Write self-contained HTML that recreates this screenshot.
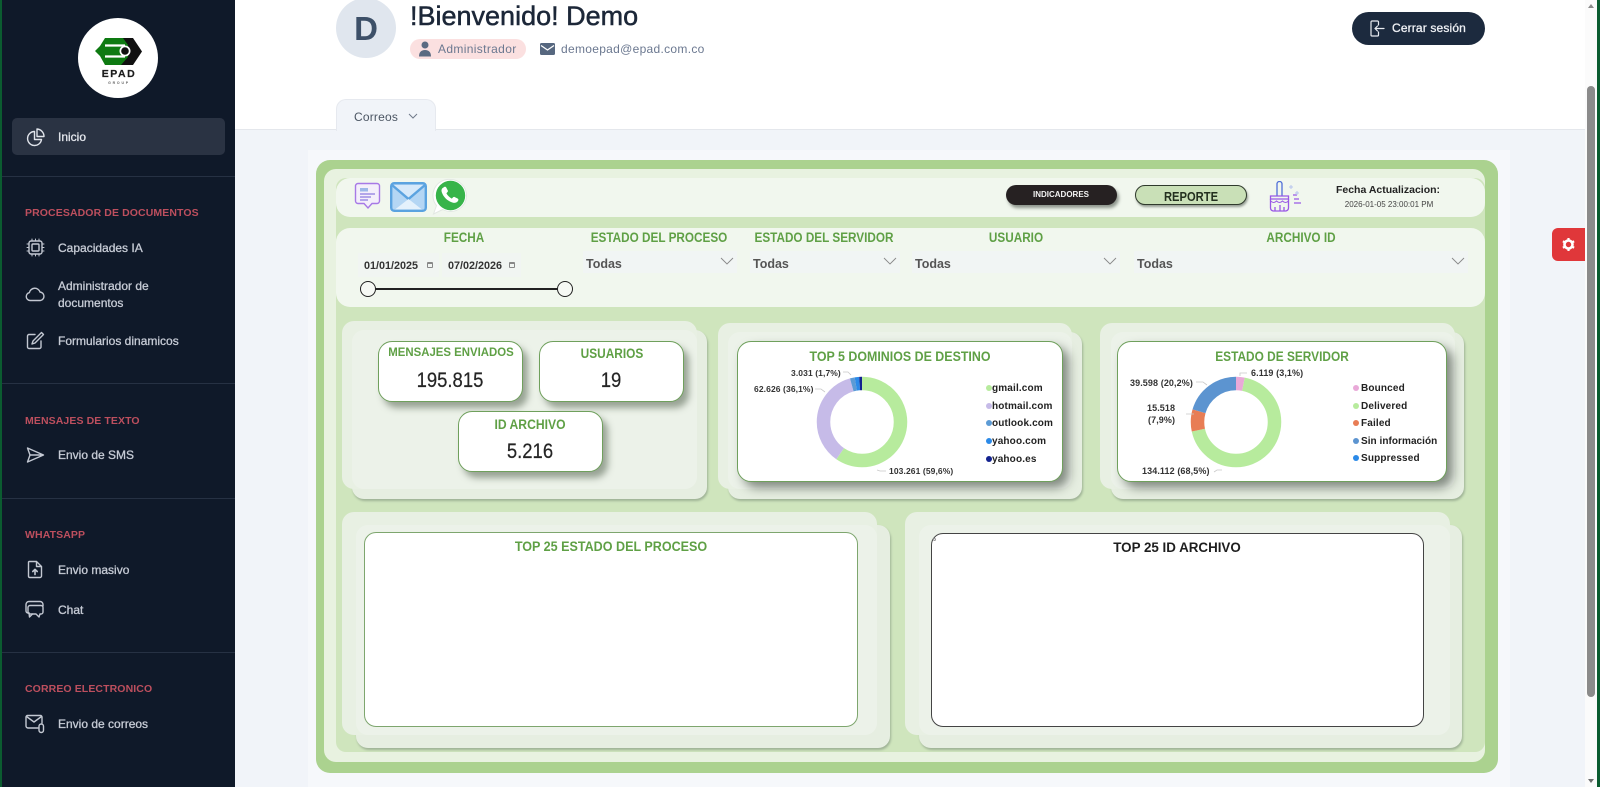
<!DOCTYPE html>
<html lang="es"><head><meta charset="utf-8"><title>Dashboard</title>
<style>
*{box-sizing:border-box}
html,body{margin:0;padding:0;width:1600px;height:787px;overflow:hidden;background:#f1f4f9;font-family:"Liberation Sans",sans-serif}
.a{position:absolute}
.t{position:absolute;white-space:nowrap;line-height:1}
.c{transform:translateX(-50%) scaleX(var(--s,1))}
.nav{position:absolute;left:58px;font-size:12px;line-height:17px;color:#c6cbd5;-webkit-text-stroke:.3px #c6cbd5;white-space:nowrap}
.sec{position:absolute;left:25px;font-size:10.5px;font-weight:bold;line-height:12px;color:#bd4f5e;letter-spacing:.1px;white-space:nowrap}
.div{position:absolute;left:2px;width:233px;height:1px;background:#263143}
.ic{position:absolute;fill:none;stroke:#c3c8d2;stroke-width:1.4;stroke-linecap:round;stroke-linejoin:round}
.back{position:absolute;background:#e6eee1;border-radius:12px}
.b1{background:#e8f0e3}
.b3{background:#ecf2e9}
.back2{box-shadow:1px 2px 2px #9fb396}
.card{position:absolute;background:#fff;border:1px solid #6fa05c;border-radius:14px;box-shadow:5px 6px 7px rgba(70,85,65,.5)}
.big{box-shadow:6px 6px 10px rgba(60,70,60,.6)}
.g{color:#5fa045;font-weight:bold}
.lab{font-size:13.5px;font-weight:bold;color:#5fa045;--s:.87}
.dd{position:absolute;height:22px;background:#f1f5f4;top:251px;color:#555;font-size:12.5px;font-weight:bold;padding:4.5px 0 0 3px;line-height:16px}
.dd svg{position:absolute;right:3px;top:6px}
.date{position:absolute;top:253px;height:24px;background:#f1f5f2;font-size:10.8px;font-weight:bold;color:#333;line-height:26px;padding-left:6px}
.date i{position:absolute;right:6px;top:9px;width:6px;height:6px;border:1px solid #888;border-top-width:2px;border-radius:1px}
.num{font-size:21px;color:#252525;-webkit-text-stroke:.2px #252525;--s:.88}
.leg{font-size:10px;font-weight:bold;color:#222;letter-spacing:.15px}
.dot{position:absolute;width:6px;height:6px;border-radius:50%}
.dl{font-size:8.5px;font-weight:bold;color:#333;letter-spacing:.1px}
</style></head><body>

<!-- main top white -->
<div class="a" style="left:235px;top:0;width:1350px;height:130px;background:#fff;border-bottom:1px solid #e4e7ec"></div>
<!-- content light block -->
<div class="a" style="left:308px;top:150px;width:1202px;height:637px;background:#f6f8fb"></div>

<!-- sidebar -->
<div class="a" style="left:0;top:0;width:235px;height:787px;background:#0f1929"></div>
<div class="a" style="left:0;top:0;width:2px;height:787px;background:#0b5c30"></div>
<div class="a" style="left:78px;top:18px;width:80px;height:80px;border-radius:50%;background:#fff"></div>
<svg class="a" style="left:78px;top:18px" width="80" height="80" viewBox="0 0 80 80">
<path d="M17 33 L22 28 L27 20 L46 20 L52 27 L52 39 L46 47 L27 47 L22 38 Z" fill="#0e7a12"/>
<path d="M45 20 L55 20 L64 33.500 L55 47 L43 47 L50 39 L50 27 Z" fill="#111"/>
<path d="M27 27.500H47M27 38.500H47" stroke="#fff" stroke-width="2.200" fill="none"/>
<circle cx="47" cy="33" r="5.500" fill="#fff"/><circle cx="47" cy="33" r="3.800" fill="#111"/>
<text x="41" y="59" text-anchor="middle" font-family="Liberation Sans" font-size="10.500" font-weight="bold" letter-spacing="1.500" fill="#1c1c1c" stroke="#1c1c1c" stroke-width=".2">EPAD</text>
<text x="41" y="66" text-anchor="middle" font-family="Liberation Sans" font-size="3.500" font-weight="bold" letter-spacing="1.800" fill="#666">GROUP</text>
</svg>
<div class="a" style="left:12px;top:118px;width:213px;height:37px;background:#2a3343;border-radius:5px"></div>
<svg class="ic" style="left:26px;top:127px;stroke:#dfe3ea" width="20" height="20" viewBox="0 0 20 20"><path d="M8.500 4.500a7 7 0 1 0 7 8h-7z"/><path d="M11 2v7.500h7A7.500 7.500 0 0 0 11 2z"/></svg>
<div class="nav" style="top:129px;color:#e4e7ed;-webkit-text-stroke:.3px #e4e7ed">Inicio</div>
<div class="div" style="top:176px"></div>
<div class="sec" style="top:207px">PROCESADOR DE DOCUMENTOS</div>
<svg class="ic" style="left:26px;top:238px" width="19" height="19" viewBox="0 0 19 19"><rect x="3" y="3" width="13" height="13" rx="2"/><rect x="6" y="6" width="7" height="7" rx="1"/><path d="M6 1v2M9.500 1v2M13 1v2M6 16v2M9.500 16v2M13 16v2M1 6h2M1 9.500h2M1 13h2M16 6h2M16 9.500h2M16 13h2" stroke-width="1"/></svg>
<div class="nav" style="top:240px">Capacidades IA</div>
<svg class="ic" style="left:25px;top:285px" width="20" height="17" viewBox="0 0 20 17"><path d="M5 15.500a4 4 0 0 1-.6-7.900A5.500 5.500 0 0 1 15 7a4.300 4.300 0 0 1 .5 8.500z"/></svg>
<div class="nav" style="top:278px;line-height:17px">Administrador de<br>documentos</div>
<svg class="ic" style="left:26px;top:331px" width="19" height="19" viewBox="0 0 19 19"><path d="M9 3.500H3a1.500 1.500 0 0 0-1.500 1.500v11A1.500 1.500 0 0 0 3 17.500h10.500A1.500 1.500 0 0 0 15 16v-6"/><path d="M15.500 1.500l2 2L9 12l-3 1 1-3z"/></svg>
<div class="nav" style="top:333px">Formularios dinamicos</div>
<div class="div" style="top:383px"></div>
<div class="sec" style="top:415px">MENSAJES DE TEXTO</div>
<svg class="ic" style="left:26px;top:446px" width="19" height="18" viewBox="0 0 19 18"><path d="M1.500 2l16 7-16 7 2.500-7zM4 9h13"/></svg>
<div class="nav" style="top:447px">Envio de SMS</div>
<div class="div" style="top:498px"></div>
<div class="sec" style="top:529px">WHATSAPP</div>
<svg class="ic" style="left:27px;top:560px" width="16" height="19" viewBox="0 0 16 19"><path d="M2 1.500h7.500l5 5V16a1.500 1.500 0 0 1-1.500 1.500H2.500A1.500 1.500 0 0 1 1.500 16V2zM9.500 1.500v5h5"/><path d="M8 14.500v-5M5.800 11.500L8 9.300l2.200 2.200" stroke-width="1.600"/></svg>
<div class="nav" style="top:562px">Envio masivo</div>
<svg class="ic" style="left:25px;top:600px" width="20" height="19" viewBox="0 0 20 19"><path d="M4 13H3a2 2 0 0 1-2-2V4.500A3 3 0 0 1 4 1.500h11a3 3 0 0 1 3 3V6"/><path d="M6 5.500h11a2 2 0 0 1 2 2V12a2 2 0 0 1-2 2h-1l-1 3-3-3H6a2 2 0 0 1-2-2V7.500a2 2 0 0 1 2-2z" transform="translate(-1 0)"/><path d="M4 13l.5 4 3-3" /></svg>
<div class="nav" style="top:602px">Chat</div>
<div class="div" style="top:652px"></div>
<div class="sec" style="top:683px">CORREO ELECTRONICO</div>
<svg class="ic" style="left:25px;top:714px" width="21" height="20" viewBox="0 0 21 20"><path d="M13 14H3a2 2 0 0 1-2-2V3a1.500 1.500 0 0 1 1.500-1.500h13A1.500 1.500 0 0 1 17 3v6"/><path d="M1.500 2.500L9 8l7.500-5.500"/><rect x="14" y="10" width="4.500" height="8.500" rx="2.200"/></svg>
<div class="nav" style="top:716px">Envio de correos</div>

<!-- header -->
<div class="a" style="left:336px;top:-2px;width:60px;height:60px;border-radius:50%;background:#e0e6ee"></div>
<div class="t c" style="left:366px;top:12px;font-size:33px;font-weight:bold;color:#3d5068">D</div>
<div class="t" style="left:410px;top:0px;font-size:27px;line-height:32px;color:#1c2738;-webkit-text-stroke:.5px #1c2738">!Bienvenido! Demo</div>
<div class="a" style="left:410px;top:39px;width:116px;height:20px;border-radius:10px;background:#fbe0e0"></div>
<svg class="a" style="left:418px;top:41px" width="14" height="16" viewBox="0 0 14 16"><circle cx="7" cy="4" r="3.500" fill="#5b6b82"/><path d="M1 15.500c0-4 2-6.500 6-6.500s6 2.500 6 6.500z" fill="#5b6b82"/></svg>
<div class="t" style="left:438px;top:43px;font-size:12px;color:#6b7890;letter-spacing:.35px">Administrador</div>
<svg class="a" style="left:540px;top:43px" width="15" height="12" viewBox="0 0 15 12"><rect width="15" height="12" rx="1.500" fill="#56677f"/><path d="M1 2.500l6.500 4.500L14 2.500" fill="none" stroke="#fff" stroke-width="1.300"/></svg>
<div class="t" style="left:561px;top:43px;font-size:12px;color:#6b7890;letter-spacing:.3px">demoepad@epad.com.co</div>
<div class="a" style="left:1352px;top:12px;width:133px;height:33px;border-radius:17px;background:#1c2a3e"></div>
<svg class="a" style="left:1370px;top:20px" width="15" height="17" viewBox="0 0 15 17" fill="none" stroke="#e8ebf0" stroke-width="1.200" stroke-linecap="round" stroke-linejoin="round"><path d="M8.500 5V2a1 1 0 0 0-1-1H2a1 1 0 0 0-1 1v13a1 1 0 0 0 1 1h5.500a1 1 0 0 0 1-1v-3"/><path d="M14 8.500H5M7.500 6L5 8.500 7.500 11"/></svg>
<div class="t" style="left:1392px;top:22px;font-size:12px;color:#eef0f4;-webkit-text-stroke:.3px #eef0f4;letter-spacing:.15px">Cerrar sesión</div>
<div class="a" style="left:336px;top:99px;width:100px;height:32px;background:#f1f4f9;border:1px solid #e6e9ef;border-bottom:none;border-radius:10px 10px 0 0"></div>
<div class="t" style="left:354px;top:111px;font-size:12px;color:#4b5563;letter-spacing:.2px">Correos</div>
<svg class="a" style="left:408px;top:113px" width="10" height="7" viewBox="0 0 10 7"><path d="M1 1l4 4 4-4" fill="none" stroke="#707a8a" stroke-width="1"/></svg>

<!-- report -->
<div class="a" style="left:316px;top:160px;width:1182px;height:613px;background:#abd28f;border-radius:14px"></div>
<div class="a" style="left:324px;top:169px;width:1161px;height:593px;background:#e8f2e0;border-radius:12px"></div>
<div class="a" style="left:336px;top:178px;width:1149px;height:574px;background:#cfe5bd;border-radius:10px"></div>
<div class="a" style="left:336px;top:178px;width:1149px;height:39px;background:#f1f7ee;border-radius:14px"></div>
<div class="a" style="left:336px;top:228px;width:1149px;height:79px;background:#f1f7ee;border-radius:14px"></div>

<!-- top bar icons -->
<svg class="a" style="left:354px;top:182px" width="27" height="28" viewBox="0 0 27 28" fill="none"><path d="M4 1.500h19a2.500 2.500 0 0 1 2.500 2.500v15a2.500 2.500 0 0 1-2.500 2.500h-5l-4 4.500-4-4.500H4A2.500 2.500 0 0 1 1.500 19V4A2.500 2.500 0 0 1 4 1.500z" stroke="#a779e6" stroke-width="1.400" fill="#f4effb"/><rect x="6" y="6" width="8" height="3.500" fill="#9db8e8"/><path d="M6 12h15M6 15h11M6 18h8" stroke="#8c7ae0" stroke-width="1.300"/></svg>
<svg class="a" style="left:390px;top:182px" width="37" height="30" viewBox="0 0 37 30"><rect x="1.200" y="1.200" width="34.600" height="27.600" rx="3" fill="#b4d6f4" stroke="#5ba3e0" stroke-width="2.400"/><path d="M2 3l16.500 14L35 3" fill="#d6e9fa" stroke="#5ba3e0" stroke-width="2.400"/><path d="M5 27.500l13.500-10.500L32 27.500z" fill="#e4f1fc"/></svg>
<svg class="a" style="left:432px;top:178px" width="36" height="38" viewBox="0 0 36 38"><path d="M18.500 1.500a16 16 0 0 1 0 32c-2.800 0-5.400-.7-7.700-2L1.500 36l3-8.500A16 16 0 0 1 18.500 1.500z" fill="#fff" stroke="#e3e8e3"/><circle cx="18.500" cy="17.500" r="14.700" fill="#37b44a"/><path d="M11.500 9.500c1-1 2.300-.9 2.800.1l1.500 2.900c.3.700 0 1.300-.5 1.800l-.9 1c1.200 2.300 2.900 4 5.400 5.300l1.200-1.200c.5-.5 1.200-.6 1.800-.3l2.800 1.400c1 .5 1.100 1.700.2 2.700-1.500 1.600-3.500 2.100-5.800 1.200-5.200-2-8.500-5.400-10.200-10.200-.7-2.100-.1-3.900 1.700-4.700z" fill="#fff"/></svg>
<div class="a" style="left:1006px;top:185px;width:111px;height:20px;border-radius:10px;background:#262122;box-shadow:2px 3px 3px rgba(60,70,60,.55)"></div>
<div class="t c" style="left:1061px;top:191px;font-size:8px;font-weight:bold;color:#f3f3f3">INDICADORES</div>
<div class="a" style="left:1135px;top:185px;width:112px;height:20px;border-radius:10px;background:#c9e0b7;border:1px solid #2f3a2c;box-shadow:1px 2px 2px rgba(60,70,60,.5)"></div>
<div class="t c" style="left:1191px;top:190px;font-size:13px;font-weight:bold;color:#23301f;--s:.86">REPORTE</div>
<svg class="a" style="left:1268px;top:181px" width="34" height="32" viewBox="0 0 34 32" fill="none"><path d="M9 15V3a2.500 2.500 0 0 1 5 0v12" stroke="#4f6fd8" stroke-width="1.300"/><path d="M2.500 15h18v3h-18z" stroke="#9a58e6" stroke-width="1.300"/><path d="M2.500 18v9a3 3 0 0 0 3 3h12a3 3 0 0 0 3-3v-9M7 26v4M12 24v6M16 26v4" stroke="#9a58e6" stroke-width="1.300"/><path d="M2.500 20c3 2 4 2 6 0 2 2 4 2 6 0 2 2 4 2 6 0" stroke="#9a58e6" stroke-width="1"/><path d="M25 14h4M26 18h5M26 22h7" stroke="#9a58e6" stroke-width="1.300"/><path d="M23 4v4M21 6h4M29 10v4M27 12h4" stroke="#b7c4ee" stroke-width="1"/></svg>
<div class="t c" style="left:1388px;top:185px;font-size:10.500px;font-weight:bold;color:#222">Fecha Actualizacion:</div>
<div class="t c" style="left:1389px;top:201px;font-size:8px;color:#444">2026-01-05 23:00:01 PM</div>

<!-- filter labels -->
<div class="t c lab" style="left:464px;top:231px">FECHA</div>
<div class="t c lab" style="left:659px;top:231px">ESTADO DEL PROCESO</div>
<div class="t c lab" style="left:824px;top:231px">ESTADO DEL SERVIDOR</div>
<div class="t c lab" style="left:1016px;top:231px">USUARIO</div>
<div class="t c lab" style="left:1301px;top:231px">ARCHIVO ID</div>
<div class="date" style="left:358px;width:81px">01/01/2025<i></i></div>
<div class="date" style="left:442px;width:79px">07/02/2026<i></i></div>
<div class="a" style="left:368px;top:288px;width:197px;height:2px;background:#222"></div>
<div class="a" style="left:360px;top:281px;width:16px;height:16px;border-radius:50%;background:#f6f9f4;border:1.500px solid #222"></div>
<div class="a" style="left:557px;top:281px;width:16px;height:16px;border-radius:50%;background:#f6f9f4;border:1.500px solid #222"></div>
<div class="dd" style="left:583px;width:154px">Todas<svg width="14" height="9" viewBox="0 0 14 9"><path d="M1 1l6 6 6-6" fill="none" stroke="#888" stroke-width=".9"/></svg></div>
<div class="dd" style="left:750px;width:150px">Todas<svg width="14" height="9" viewBox="0 0 14 9"><path d="M1 1l6 6 6-6" fill="none" stroke="#888" stroke-width=".9"/></svg></div>
<div class="dd" style="left:912px;width:208px">Todas<svg width="14" height="9" viewBox="0 0 14 9"><path d="M1 1l6 6 6-6" fill="none" stroke="#888" stroke-width=".9"/></svg></div>
<div class="dd" style="left:1134px;width:334px">Todas<svg width="14" height="9" viewBox="0 0 14 9"><path d="M1 1l6 6 6-6" fill="none" stroke="#888" stroke-width=".9"/></svg></div>

<!-- KPI group -->
<div class="back back2" style="left:352px;top:330px;width:355px;height:169px"></div>
<div class="back b1" style="left:342px;top:321px;width:355px;height:168px"></div>
<div class="back b3" style="left:352px;top:330px;width:345px;height:159px"></div>
<div class="card" style="left:378px;top:341px;width:145px;height:61px"></div>
<div class="t c g" style="left:451px;top:346px;font-size:12px;--s:.95">MENSAJES ENVIADOS</div>
<div class="t c num" style="left:450px;top:370px">195.815</div>
<div class="card" style="left:539px;top:341px;width:145px;height:61px"></div>
<div class="t c g" style="left:612px;top:347px;font-size:13.500px;--s:.88">USUARIOS</div>
<div class="t c num" style="left:611px;top:370px">19</div>
<div class="card" style="left:458px;top:411px;width:145px;height:61px"></div>
<div class="t c g" style="left:530px;top:418px;font-size:13.500px;--s:.9">ID ARCHIVO</div>
<div class="t c num" style="left:530px;top:441px">5.216</div>

<!-- donut 1 -->
<div class="back back2" style="left:728px;top:332px;width:354px;height:167px"></div>
<div class="back b1" style="left:718px;top:323px;width:354px;height:166px"></div>
<div class="back b3" style="left:728px;top:332px;width:344px;height:157px"></div>
<div class="card big" style="left:737px;top:341px;width:326px;height:141px"></div>
<div class="t c g" style="left:900px;top:350px;font-size:13.500px;--s:.92">TOP 5 DOMINIOS DE DESTINO</div>
<svg class="a" style="left:737px;top:341px" width="326" height="141" viewBox="737 341 326 141">
<g fill="none" stroke-width="13.500" transform="rotate(-90 862 422)">
<circle cx="862" cy="422" r="38.500" pathLength="100" stroke="#b7eb9d" stroke-dasharray="59.6 40.4"/>
<circle cx="862" cy="422" r="38.500" pathLength="100" stroke="#c6bbe8" stroke-dasharray="36.1 63.900" stroke-dashoffset="-59.6"/>
<circle cx="862" cy="422" r="38.500" pathLength="100" stroke="#5c9bd5" stroke-dasharray="1.700 98.300" stroke-dashoffset="-95.7"/>
<circle cx="862" cy="422" r="38.500" pathLength="100" stroke="#2b8ae8" stroke-dasharray="1.600 98.400" stroke-dashoffset="-97.4"/>
<circle cx="862" cy="422" r="38.500" pathLength="100" stroke="#13228f" stroke-dasharray="1 99" stroke-dashoffset="-99"/>
</g>
<path d="M843 372h5l3 3M815 389h6l4 3M877 470l3 1h6" fill="none" stroke="#c9c9c9" stroke-width=".8"/>
</svg>
<div class="t dl" style="left:791px;top:369px">3.031 (1,7%)</div>
<div class="t dl" style="left:754px;top:385px">62.626 (36,1%)</div>
<div class="t dl" style="left:889px;top:467px">103.261 (59,6%)</div>
<i class="dot" style="left:986px;top:385px;background:#b7eb9d"></i><div class="t leg" style="left:992px;top:384px">gmail.com</div>
<i class="dot" style="left:986px;top:403px;background:#c6bbe8"></i><div class="t leg" style="left:992px;top:402px">hotmail.com</div>
<i class="dot" style="left:986px;top:420px;background:#5c9bd5"></i><div class="t leg" style="left:992px;top:419px">outlook.com</div>
<i class="dot" style="left:986px;top:438px;background:#2b8ae8"></i><div class="t leg" style="left:992px;top:437px">yahoo.com</div>
<i class="dot" style="left:986px;top:456px;background:#13228f"></i><div class="t leg" style="left:992px;top:455px">yahoo.es</div>

<!-- donut 2 -->
<div class="back back2" style="left:1111px;top:332px;width:353px;height:167px"></div>
<div class="back b1" style="left:1100px;top:323px;width:355px;height:166px"></div>
<div class="back b3" style="left:1111px;top:332px;width:344px;height:157px"></div>
<div class="card big" style="left:1117px;top:341px;width:330px;height:141px"></div>
<div class="t c g" style="left:1282px;top:350px;font-size:13.500px;--s:.88">ESTADO DE SERVIDOR</div>
<svg class="a" style="left:1117px;top:341px" width="330" height="141" viewBox="1117 341 330 141">
<g fill="none" stroke-width="13.500" transform="rotate(-90 1236 422)">
<circle cx="1236" cy="422" r="38.500" pathLength="100" stroke="#e9a9d8" stroke-dasharray="3.100 96.900"/>
<circle cx="1236" cy="422" r="38.500" pathLength="100" stroke="#b7eb9d" stroke-dasharray="68.5 31.500" stroke-dashoffset="-3.100"/>
<circle cx="1236" cy="422" r="38.500" pathLength="100" stroke="#e87d55" stroke-dasharray="7.900 92.100" stroke-dashoffset="-71.6"/>
<circle cx="1236" cy="422" r="38.500" pathLength="100" stroke="#5c94d0" stroke-dasharray="20.5 79.500" stroke-dashoffset="-79.5"/>
</g>
<path d="M1240 376v-3h7M1196 382h7l4 3M1186 414h8M1222 470h-5l-3 2" fill="none" stroke="#c9c9c9" stroke-width=".8"/>
</svg>
<div class="t dl" style="left:1251px;top:369px;font-size:9px">6.119 (3,1%)</div>
<div class="t dl" style="left:1130px;top:379px;font-size:9px">39.598 (20,2%)</div>
<div class="t dl" style="left:1147px;top:404px;font-size:9px">15.518</div>
<div class="t dl" style="left:1148px;top:416px;font-size:9px">(7,9%)</div>
<div class="t dl" style="left:1142px;top:467px;font-size:9px">134.112 (68,5%)</div>
<i class="dot" style="left:1353px;top:385px;background:#e9a9d8"></i><div class="t leg" style="left:1361px;top:384px">Bounced</div>
<i class="dot" style="left:1353px;top:403px;background:#b7eb9d"></i><div class="t leg" style="left:1361px;top:402px">Delivered</div>
<i class="dot" style="left:1353px;top:420px;background:#e87d55"></i><div class="t leg" style="left:1361px;top:419px">Failed</div>
<i class="dot" style="left:1353px;top:438px;background:#5c94d0"></i><div class="t leg" style="left:1361px;top:437px;letter-spacing:.05px">Sin información</div>
<i class="dot" style="left:1353px;top:455px;background:#2b8ae8"></i><div class="t leg" style="left:1361px;top:454px">Suppressed</div>

<!-- bottom left -->
<div class="back back2" style="left:356px;top:525px;width:534px;height:223px"></div>
<div class="back b1" style="left:342px;top:512px;width:535px;height:223px"></div>
<div class="back b3" style="left:356px;top:525px;width:521px;height:210px"></div>
<div class="a" style="left:364px;top:532px;width:494px;height:195px;background:#fff;border:1px solid #7ea66e;border-radius:12px"></div>
<div class="t c g" style="left:611px;top:540px;font-size:13.500px;--s:.93">TOP 25 ESTADO DEL PROCESO</div>

<!-- bottom right -->
<div class="back back2" style="left:919px;top:525px;width:543px;height:223px"></div>
<div class="back b1" style="left:905px;top:512px;width:545px;height:223px"></div>
<div class="back b3" style="left:919px;top:525px;width:531px;height:210px"></div>
<div class="a" style="left:931px;top:533px;width:493px;height:194px;background:#fff;border:1px solid #444;border-radius:12px"></div>
<div class="a" style="left:933px;top:538px;width:3px;height:3px;border:1px solid #999;border-radius:50%"></div>
<div class="t c" style="left:1177px;top:541px;font-size:13.500px;font-weight:bold;color:#1e1e1e;--s:.99">TOP 25 ID ARCHIVO</div>

<!-- gear -->
<div class="a" style="left:1552px;top:228px;width:33px;height:33px;background:#e0373a;border-radius:6px 0 0 6px"></div>
<svg class="a" style="left:1561px;top:237px" width="15" height="15" viewBox="0 0 15 15"><circle cx="7.500" cy="7.500" r="4" fill="none" stroke="#fff" stroke-width="2.600"/><path d="M7.500 1v2.500M7.500 11.500V14M1.900 4.250l2.200 1.250M10.900 9.500l2.200 1.250M1.900 10.750l2.200-1.250M10.900 5.500l2.200-1.250" stroke="#fff" stroke-width="2.200"/></svg>

<!-- scrollbar -->
<div class="a" style="left:1585px;top:0;width:12px;height:787px;background:#fbfbfb"></div>
<div class="a" style="left:1587px;top:86px;width:8px;height:611px;background:#8b8b8b;border-radius:4px"></div>
<div class="a" style="left:1588px;top:4px;width:0;height:0;border-left:3px solid transparent;border-right:3px solid transparent;border-bottom:4px solid #8a8a8a"></div>
<div class="a" style="left:1588px;top:779px;width:0;height:0;border-left:3px solid transparent;border-right:3px solid transparent;border-top:4px solid #6e6e6e"></div>
<div class="a" style="left:1597px;top:0;width:3px;height:787px;background:#0b5c30"></div>
</body></html>
